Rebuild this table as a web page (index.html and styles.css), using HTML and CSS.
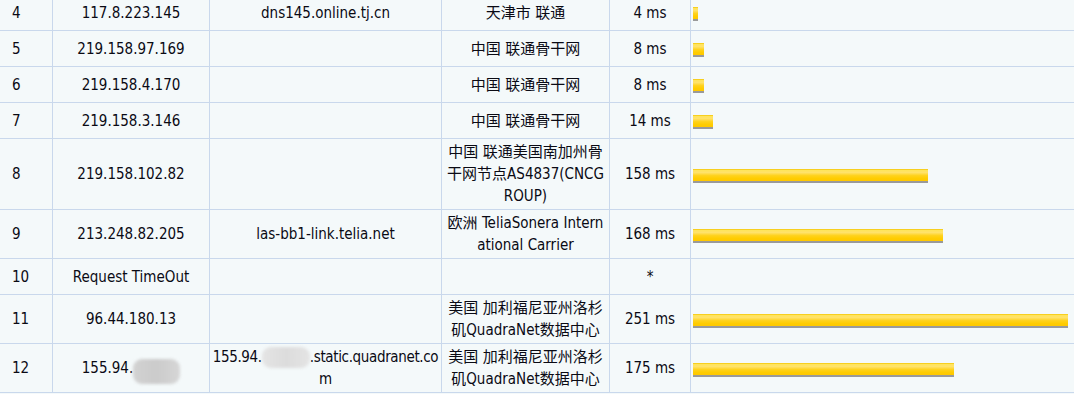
FILE: index.html
```html
<!DOCTYPE html>
<html lang="zh-CN">
<head>
<meta charset="utf-8">
<title>Traceroute</title>
<link rel="stylesheet" href="styles.css">
</head>
<body>
<div class="trace">
  <div class="c hop">4</div><div class="c">117.8.223.145</div><div class="c">dns145.online.tj.cn</div><div class="c">天津市 联通</div><div class="c">4 ms</div><div class="c bar-cell"><span class="bar" style="width:5px"></span></div>
  <div class="c hop">5</div><div class="c">219.158.97.169</div><div class="c"></div><div class="c">中国 联通骨干网</div><div class="c">8 ms</div><div class="c bar-cell"><span class="bar" style="width:11px"></span></div>
  <div class="c hop">6</div><div class="c">219.158.4.170</div><div class="c"></div><div class="c">中国 联通骨干网</div><div class="c">8 ms</div><div class="c bar-cell"><span class="bar" style="width:11px"></span></div>
  <div class="c hop">7</div><div class="c">219.158.3.146</div><div class="c"></div><div class="c">中国 联通骨干网</div><div class="c">14 ms</div><div class="c bar-cell"><span class="bar" style="width:20px"></span></div>
  <div class="c hop">8</div><div class="c">219.158.102.82</div><div class="c"></div><div class="c"><span>中国 联通美国南加州骨干网节点AS4837(CNCGROUP)</span></div><div class="c">158 ms</div><div class="c bar-cell"><span class="bar" style="width:235px"></span></div>
  <div class="c hop">9</div><div class="c">213.248.82.205</div><div class="c">las-bb1-link.telia.net</div><div class="c"><span>欧洲 TeliaSonera International Carrier</span></div><div class="c">168 ms</div><div class="c bar-cell"><span class="bar" style="width:250px"></span></div>
  <div class="c hop">10</div><div class="c">Request TimeOut</div><div class="c"></div><div class="c"></div><div class="c">*</div><div class="c bar-cell"></div>
  <div class="c hop">11</div><div class="c">96.44.180.13</div><div class="c"></div><div class="c"><span>美国 加利福尼亚州洛杉矶QuadraNet数据中心</span></div><div class="c">251 ms</div><div class="c bar-cell"><span class="bar" style="width:375px"></span></div>
  <div class="c hop">12</div><div class="c"><span>155.94.<span class="mask mask-ip"></span></span></div><div class="c host-long"><span>155.94.<span class="mask mask-host"></span>.static.quadranet.com</span></div><div class="c"><span>美国 加利福尼亚州洛杉矶QuadraNet数据中心</span></div><div class="c">175 ms</div><div class="c bar-cell"><span class="bar" style="width:261px"></span></div>
</div>
</body>
</html>
```
FILE: styles.css
```css
html, body {
  margin: 0;
  padding: 0;
  background: #f4f9fa;
}

body {
  width: 1074px;
  height: 394px;
  overflow: hidden;
  font-family: "DejaVu Sans Condensed", "Liberation Sans", "Noto Sans CJK SC", sans-serif;
  font-size: 15px;
  line-height: 22px;
  color: #0a0a14;
}

.trace {
  display: grid;
  grid-template-columns: 53px 157px 232px 168px 81px 1fr;
  grid-auto-rows: minmax(36px, auto);
  margin-top: -5px;
  background: #f4f9fa;
}

.c {
  box-sizing: border-box;
  display: flex;
  align-items: center;
  justify-content: center;
  text-align: center;
  padding: 2px 3px;
  border-right: 1px solid #c9d8ec;
  border-bottom: 1px solid #c9d8ec;
  word-break: break-all;
  min-width: 0;
}

.c:nth-child(6n) {
  border-right: none;
}

.hop {
  justify-content: flex-start;
  padding-left: 12px;
}

.host-long {
  padding: 2px 1px;
  letter-spacing: -0.35px;
}

.bar-cell {
  justify-content: flex-start;
  padding-left: 2px;
}

.bar {
  display: block;
  height: 12px;
  margin-top: 3px;
  border-bottom: 2px solid #9a9a9a;
  background: linear-gradient(#f3c400 0, #ffe45c 12%, #ffe26a 30%, #ffd21c 55%, #ffcc00 80%, #ffc800 100%);
}

.mask {
  display: inline-block;
  vertical-align: middle;
  border-radius: 9px;
  filter: blur(1.5px);
}

.mask-ip {
  width: 47px;
  height: 25px;
  margin-top: 6px;
  background: linear-gradient(90deg, #d2d2d2, #cbcbcb 50%, #d6d6d6);
}

.mask-host {
  width: 48px;
  height: 21px;
  background: linear-gradient(90deg, #e4e4e4, #dcdcdc 50%, #e4e4e4);
}
```
